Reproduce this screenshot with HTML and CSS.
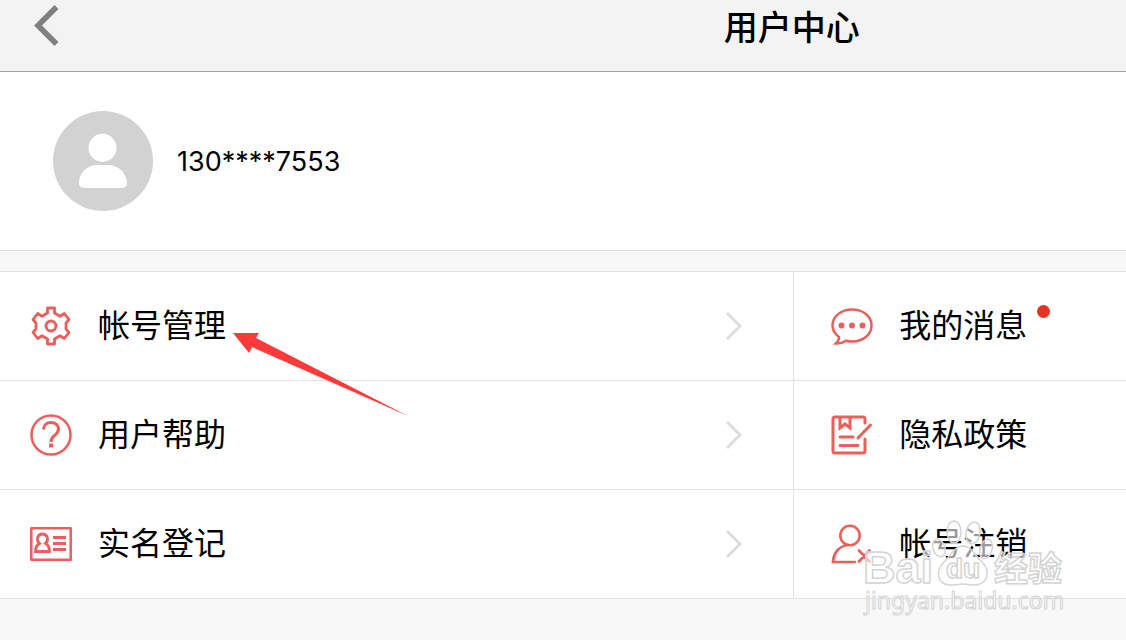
FILE: index.html
```html
<!DOCTYPE html>
<html lang="zh-CN">
<head>
  <meta charset="UTF-8">
  <meta name="viewport" content="width=device-width, initial-scale=1">
  <title>用户中心</title>
  <link rel="stylesheet" href="styles.css">
</head>
<body>
  <!-- Top bar -->
  <header class="topbar">
    <button class="back" type="button" aria-label="返回">
      <svg width="26" height="42" viewBox="0 0 26 42"><path d="M22.500 2 4 20.500 22.500 39" fill="none" stroke="#808080" stroke-width="5.600"/></svg>
    </button>
    <h1>用户中心</h1>
  </header>

  <main>
    <section class="profile">
      <svg class="avatar" width="100" height="100" viewBox="0 0 100 100">
        <circle cx="50" cy="50" r="50" fill="#d2d2d2"/>
        <circle cx="49.500" cy="36.800" r="14" fill="#fff"/>
        <path d="M26 72C26 62 34 54 44 54h11c10 0 19 8 19 18 0 4-2 5-9 5H35c-7 0-9-1-9-5Z" fill="#fff"/>
      </svg>
      <span class="phone">130****7553</span>
    </section>

    <!-- Menu -->
    <nav class="menu">
      <a class="item" href="#account">
        <svg class="icon" viewBox="0 0 42 42">
          <path d="M17.500 3h7v5l5.500 3.200 4.300-2.700 4.700 6-3 3.500v6l3 3.500-4.700 6-4.300-2.700-5.500 3.200v5h-7v-5L12 30.800l-4.300 2.700L3 27.500 6 24v-6l-3-3.500 4.700-6 4.300 2.700L17.500 8Z" stroke-width="2.800" stroke-linejoin="round"/>
          <circle cx="21" cy="21" r="5" stroke-width="3"/>
        </svg>
        <span>帐号管理</span>
        <svg class="chevron" viewBox="0 0 18 28"><path d="M2 1 15 14 2 27"/></svg>
      </a>
      <a class="item" href="#messages">
        <svg class="icon" viewBox="0 0 42 42">
          <path d="M8 32C4 29 1.500 25 1.500 20.500 1.500 11.500 10 4.500 21 4.500S40.500 11 40.500 20.500 32 36.500 21 36.500c-2 0-4-.3-6-.8-3 2-6 3-10 2.800C7.500 36.500 8 35 8 32Z"/>
          <g class="fill"><circle cx="10.500" cy="20.500" r="3"/><circle cx="21" cy="20.500" r="3"/><circle cx="31.500" cy="20.500" r="3"/></g>
        </svg>
        <span class="has-dot">我的消息</span>
      </a>
      <a class="item" href="#help">
        <svg class="icon" viewBox="0 0 42 42">
          <circle cx="21" cy="21" r="19.500"/>
          <path d="M13.500 15.500c0-4 3-7 7.500-7s7.500 3 7.500 6.500c0 3-1.500 4.500-4 6.500s-3.500 3-3.500 6.500" stroke-width="3"/>
          <rect class="fill" x="19" y="29.500" width="4" height="4"/>
        </svg>
        <span>用户帮助</span>
        <svg class="chevron" viewBox="0 0 18 28"><path d="M2 1 15 14 2 27"/></svg>
      </a>
      <a class="item" href="#privacy">
        <svg class="icon" viewBox="0 0 42 42">
          <path d="M34 9V5q0-2-2-2H4Q2 3 2 5v32q0 2 2 2h28q2 0 2-2V25M9 3v11l5-4 5 4V3M9 23h13M9 31.500h18M27 24 39.500 11" stroke-width="3" stroke-linecap="round"/>
        </svg>
        <span>隐私政策</span>
      </a>
      <a class="item" href="#realname">
        <svg class="icon" viewBox="0 0 42 42">
          <rect x="1.300" y="5.300" width="39.400" height="31.400" stroke-linejoin="round"/>
          <path d="M9.500 20.500C6 17.500 7 11 12.500 11s6.500 6.500 3 9.500c2.500 1.300 4 3.500 4 8h-14c0-4.500 1.500-6.700 4-8ZM23 14.500h13M23 20.500h13M23 26.500h13" stroke-width="2.800"/>
        </svg>
        <span>实名登记</span>
        <svg class="chevron" viewBox="0 0 18 28"><path d="M2 1 15 14 2 27"/></svg>
      </a>
      <a class="item" href="#cancel">
        <svg class="icon" viewBox="0 0 42 42">
          <circle cx="19" cy="12.500" r="9.700"/>
          <path d="M17 22C8 23 2.500 30 2 39H24M28 27.500l10.500 11M38.500 27.500 28 38.500" stroke-width="2.700" stroke-linecap="round"/>
        </svg>
        <span>帐号注销</span>
      </a>
      <!-- Pointer over the first entry -->
      <svg class="pointer" width="176" height="84" viewBox="0 0 176 84"><path d="M0 0h26l-3 5 152 78L19 14l-3 6Z" fill="#fc3a3a"/></svg>
    </nav>
  </main>

  <!-- Watermark -->
  <svg class="watermark" width="210" height="100" viewBox="0 0 210 100">
    <g class="outline">
      <ellipse cx="79" cy="31" rx="6" ry="9" transform="rotate(-20 79 31)"/>
      <ellipse cx="94" cy="15" rx="7" ry="11"/>
      <ellipse cx="113" cy="16" rx="7" ry="11" transform="rotate(12 113 16)"/>
      <ellipse cx="126" cy="32" rx="6" ry="10" transform="rotate(15 126 32)"/>
      <path d="M103 29c9 0 12 10 19 16 9 9 6 23-8 23-5 0-7-1-11-1s-6 1-12 1c-14 0-16-14-7-23 7-6 10-16 19-16Z"/>
      <text class="latin" x="3" y="66" font-size="45">Bai</text>
      <text class="latin" x="86" y="61" font-size="28">du</text>
      <text class="cjk" x="134" y="64" font-size="34">经验</text>
      <text class="url" x="5" y="92" font-size="23">jingyan.baidu.com</text>
    </g>
  </svg>
</body>
</html>
```

FILE: styles.css
```css
* {
  margin: 0;
  padding: 0;
  box-sizing: border-box;
}
body {
  min-height: 100vh;
  background: #f8f8f8;
  color: #000;
  font-family: "Noto Sans CJK SC", sans-serif;
  overflow-x: hidden;
}
/* Top bar */
.topbar {
  display: grid;
  grid-template-columns: 41% 1fr;
  height: 72px;
  background: #f3f3f3;
  border-bottom: 1px solid #a0a0a0;
}
.topbar h1 {
  padding-right: 4px;
  font-size: 34px;
  font-weight: 500;
  line-height: 52px;
  text-align: center;
}
.back {
  justify-self: start;
  height: 52px;
  padding: 0 34px;
  background: none;
  border: none;
  cursor: pointer;
}
.back svg {
  display: block;
}
/* Profile */
.profile {
  display: flex;
  align-items: center;
  gap: 24px;
  height: 179px;
  padding: 0 53px;
  margin-bottom: 20px;
  background: #fff;
  border-bottom: 1px solid #e2e2e2;
}
.phone {
  font-family: Inter, sans-serif;
  font-size: 27px;
}
/* Menu */
.menu {
  position: relative;
  display: grid;
  grid-template-columns: 31fr 13fr;
  background: #fff;
  border-top: 1px solid #e2e2e2;
}
.item {
  display: flex;
  align-items: center;
  gap: 26px;
  height: 109px;
  padding: 0 50px 0 30px;
  border-bottom: 1px solid #e2e2e2;
  color: #000;
  font-size: 32px;
  line-height: 48px;
  text-decoration: none;
}
.item:nth-child(even) {
  padding: 0 37px;
  border-left: 1px solid #e2e2e2;
}
.item span {
  padding-bottom: 6px;
}
.icon {
  flex: none;
  width: 42px;
  height: 42px;
  fill: none;
  stroke: #ea5f5b;
  stroke-width: 2.5;
}
.fill {
  fill: #ea5f5b;
  stroke: none;
}
.chevron {
  width: 18px;
  height: 28px;
  margin-left: auto;
  fill: none;
  stroke: #dedede;
  stroke-width: 3;
}
.has-dot {
  position: relative;
}
.has-dot::after {
  content: "";
  position: absolute;
  top: 6px;
  right: -23px;
  width: 13px;
  height: 13px;
  border-radius: 50%;
  background: #e63323;
}
.pointer {
  position: absolute;
  top: 61px;
  left: 233px;
}
/* Watermark */
.watermark {
  position: absolute;
  top: 517px;
  right: 56px;
  pointer-events: none;
}
.outline {
  fill: rgba(255, 255, 255, 0.6);
  stroke: #d4d4d4;
  stroke-width: 1.5;
}
.latin {
  font-family: "Liberation Sans", sans-serif;
  font-weight: 700;
}
.cjk {
  font-family: "Noto Sans CJK SC", sans-serif;
  font-weight: 700;
}
.url {
  font-family: "Noto Sans", sans-serif;
  stroke-width: 1;
}
```
